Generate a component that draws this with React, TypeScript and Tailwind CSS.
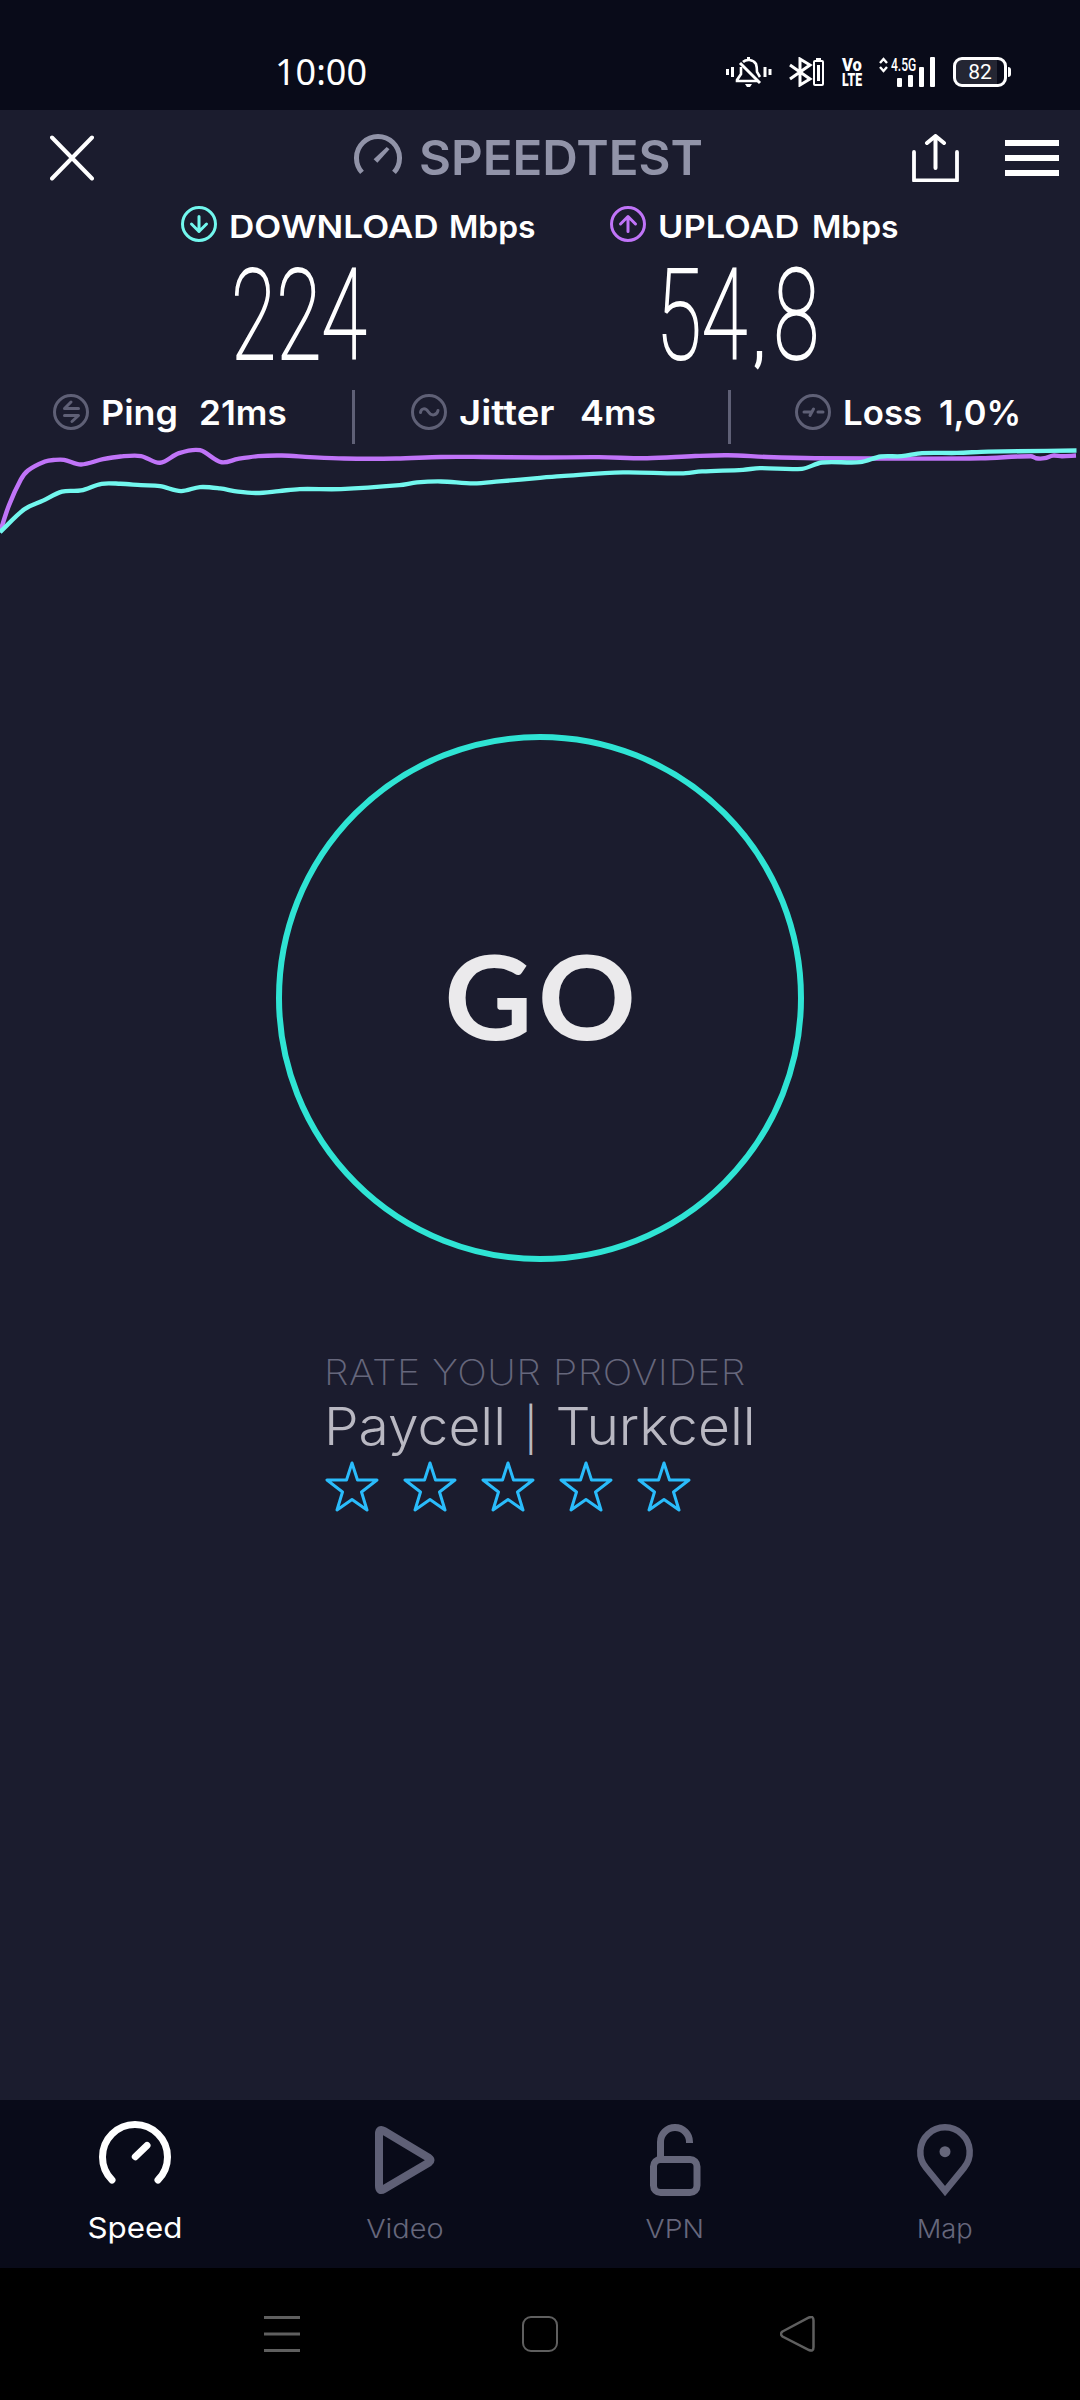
import { ReactNode } from "react";

type Point = [number, number];

const uploadPoints: Point[] = [
  [0, 106], [9, 78], [20.7, 51.7], [28, 42], [45, 32.7], [55, 31], [64, 31], [81, 35.8],
  [103, 30.3], [120.5, 27.5], [141, 27], [160, 34], [179, 24], [200, 21],
  [221, 33.4], [238, 30], [258, 27.2], [282, 26.5], [310, 28.2], [344, 29.6],
  [396, 29.6], [441, 28], [482, 28], [540, 28.5], [599, 28.2], [647, 29.3],
  [695, 27], [728, 26.2], [767, 28], [815, 29.3], [884, 29.6], [981, 29.3],
  [1031, 27.2], [1036, 29.3], [1044.5, 29.3], [1053, 26.5], [1062, 27.2],
  [1076, 26.5],
];

const downloadPoints: Point[] = [
  [0, 106], [24, 82.6], [43, 73.3], [62, 64], [81, 62.7], [101.6, 55.8],
  [120.5, 55.8], [141, 57.2], [160, 58.2], [181, 63.4], [200, 59.2],
  [220, 60.6], [238, 64], [256.5, 65.4], [279, 63.4], [299.6, 61.3],
  [341, 61.3], [399.5, 57.2], [417, 54.4], [441, 53.4], [473.5, 55.4],
  [499, 53.4], [540, 49.6], [561, 47.9], [623, 44], [681, 45], [702, 43],
  [743, 41.3], [760, 39.6], [802, 40.3], [822, 33.7], [860, 33.4],
  [881, 27.5], [901.6, 27.2], [922, 24], [957, 23.8], [988, 22.4],
  [1076.5, 21.3],
];

// Smooth curve through all points, control points kept inside each segment
function toPath(points: Point[]) {
  const slope = (i: number) => {
    const a = points[Math.max(i - 1, 0)];
    const b = points[Math.min(i + 1, points.length - 1)];
    return (b[1] - a[1]) / (b[0] - a[0]);
  };
  return points.reduce((path, [x, y], i) => {
    if (i === 0) return `M${x} ${y}`;
    const [px, py] = points[i - 1];
    const dx = (x - px) / 3;
    return `${path}C${px + dx} ${py + slope(i - 1) * dx} ${x - dx} ${
      y - slope(i) * dx
    } ${x} ${y}`;
  }, "");
}

function StatusBar() {
  return (
    <div className="flex h-[110px] items-start bg-[#090b19] pt-[57px] text-white">
      <span className="ml-[275px] w-[451px] font-['Noto_Sans'] text-[36px] leading-[30px]">
        10:00
      </span>
      <svg width="46" height="30" viewBox="0 0 46 30" fill="none" stroke="#fff">
        <path d="M1.5 12v6M6.5 10v10M39 10v10M44 12v6" strokeWidth="3" />
        <path d="M15 10v7l-4 6v1h21M17 5c3-3 10-3 13 2 1 3 1 5 1 8l3 5" strokeWidth="2.6" />
        <path d="M22.5 0v3M14 6l20 20" strokeWidth="3" />
        <path d="M19 27h7l-2 3h-3z" fill="#fff" stroke="none" />
      </svg>
      <svg className="ml-[17px]" width="36" height="30" viewBox="0 0 36 30" fill="none" stroke="#fff">
        <path d="M1 8l20 14-10 6V2l10 6L1 22" strokeWidth="3" />
        <rect x="25" y="4" width="9" height="24" rx="1" strokeWidth="2" />
        <path d="M27 2.5h5M29.5 8v16" strokeWidth="3" />
      </svg>
      <span className="ml-[17px] flex w-[22px] flex-col font-['Roboto'] font-black">
        <span className="w-[24px] origin-left scale-x-[.92] text-[18px] leading-[15px]">Vo</span>
        <span className="w-[28px] origin-left scale-x-[.68] text-[18px] leading-[16px]">LTE</span>
      </span>
      <span className="relative ml-[15px] h-[30px] w-[58px]">
        <svg width="58" height="30" viewBox="0 0 58 30" fill="#fff">
          <path d="M1 6l3.5-4L8 6M1 10l3.5 4L8 10" fill="none" stroke="#fff" strokeWidth="2.4" />
          <rect x="18" y="21" width="5" height="9" rx="1" />
          <rect x="29" y="18" width="5" height="12" rx="1" />
          <rect x="40" y="10" width="5" height="20" rx="1" />
          <rect x="51" y="0" width="5" height="30" rx="1" />
        </svg>
        <span className="absolute left-[12px] top-[-1px] origin-left scale-x-[.67] font-['Roboto'] text-[18px] font-medium leading-[18px]">
          4.5G
        </span>
      </span>
      <span className="ml-[16px] flex h-[30px] w-[54px] items-center justify-center rounded-[9px] border-[3px] border-white bg-linear-to-r from-[#242633] from-85% to-transparent to-85% font-['Roboto'] text-[21px] leading-none">
        82
      </span>
      <span className="ml-px mt-[10px] h-[10px] w-[3px] rounded-r-sm bg-white" />
    </div>
  );
}

function Header() {
  return (
    <div className="flex h-[96px] items-center">
      <svg className="ml-[50px]" width="44" height="46" viewBox="0 0 44 46" stroke="#fff" strokeWidth="4" strokeLinecap="round">
        <path d="M2 2.500l40 41M42 2.500l-40 41" />
      </svg>
      <svg className="ml-[260px]" width="48" height="48" viewBox="0 0 48 48" fill="none">
        <path d="M8 38.400A21.500 21.500 0 1 1 40 38.400" stroke="#9193a8" strokeWidth="5" />
        <path d="M19.600 25.300L32.700 13l2.800 2.300L23.400 28.700z" fill="#9193a8" />
      </svg>
      <span className="ml-[17px] w-[490px] font-['Inter'] text-[48px] font-semibold leading-[48px] text-[#9193a8]">
        <span className="inline-block origin-left scale-x-[1.025]">SPEEDTEST</span>
      </span>
      <svg className="ml-[3px]" width="47" height="48" viewBox="0 0 47 48" fill="none" stroke="#fff" strokeLinecap="round" strokeLinejoin="round">
        <path d="M2 18v28.500h43V18" strokeWidth="3.800" />
        <path d="M23.500 34V3M15 9l8.500-7L32 9" strokeWidth="4" />
      </svg>
      <div className="ml-[46px] flex w-[54px] flex-col gap-[9px]">
        <div className="h-[6px] bg-white" />
        <div className="h-[6px] bg-white" />
        <div className="h-[6px] bg-white" />
      </div>
    </div>
  );
}

function CircleIcon({ color, children }: { color: string; children: ReactNode }) {
  return (
    <svg className="shrink-0" width="36" height="36" viewBox="0 0 36 36" fill="none" stroke={color} strokeWidth="3" strokeLinecap="round" strokeLinejoin="round">
      <circle cx="18" cy="18" r="16.500" />
      {children}
    </svg>
  );
}

function Results() {
  return (
    <div className="flex h-[184px] font-['Inter'] text-white">
      <div className="ml-[181px] w-[429px]">
        <div className="flex h-[36px] items-center text-[31.500px] font-semibold leading-none">
          <CircleIcon color="#72f7ee">
            <path d="M18 10.500v15M10.500 18l7.500 7.500 7.500-7.500" />
          </CircleIcon>
          <span className="relative top-[3px] ml-[12px] w-[220px]">
            <span className="inline-block origin-left scale-x-[1.115]">DOWNLOAD</span>
          </span>
          <span className="relative top-[3px] origin-left scale-x-[1.010]">Mbps</span>
        </div>
        <div className="ml-[50px] mt-[16px] flex origin-left scale-x-[.655] font-['Roboto'] text-[126px] font-thin leading-[116px] [-webkit-text-stroke:2.200px_#fff]">
          224
        </div>
      </div>
      <div>
        <div className="flex h-[36px] items-center text-[31.500px] font-semibold leading-none">
          <CircleIcon color="#c074f8">
            <path d="M18 25.500v-15M10.500 18l7.500-7.500 7.500 7.500" />
          </CircleIcon>
          <span className="relative top-[3px] ml-[12px] w-[154px]">
            <span className="inline-block origin-left scale-x-[1.095]">UPLOAD</span>
          </span>
          <span className="relative top-[3px] origin-left scale-x-[1.010]">Mbps</span>
        </div>
        <div className="ml-[46px] mt-[16px] flex origin-left scale-x-[.66] items-baseline font-['Roboto'] text-[126px] font-thin leading-[116px] [-webkit-text-stroke:2.200px_#fff]">
          54
          <span className="w-[40px] pl-[12px] text-[64px] font-normal leading-none">,</span>
          8
        </div>
      </div>
    </div>
  );
}

function Stats() {
  return (
    <div className="flex h-[54px] font-['Inter'] text-[34.500px] font-semibold leading-none text-white">
      <div className="ml-[53px] flex h-[44px] w-[299px] items-center">
        <CircleIcon color="#5f6076">
          <path d="M25.500 14.500H11.500L18 8M11.500 21.500h14L19 27.500" />
        </CircleIcon>
        <span className="relative top-px ml-[12px] w-[98px] origin-left scale-x-[1.040]">Ping</span>
        <span className="relative top-px origin-left scale-x-[1.020]">21ms</span>
      </div>
      <div className="w-[3px] bg-[#5f6076]" />
      <div className="ml-[56px] flex h-[44px] w-[317px] items-center">
        <CircleIcon color="#5f6076">
          <path d="M9.500 18.500c.5-4.500 5-5 8-.5s8.500 3.500 9.500-1.500" />
        </CircleIcon>
        <span className="relative top-px ml-[12px] w-[121px] origin-left scale-x-[1.110]">Jitter</span>
        <span className="relative top-px origin-left scale-x-[1.040]">4ms</span>
      </div>
      <div className="w-[3px] bg-[#5f6076]" />
      <div className="ml-[64px] flex h-[44px] items-center">
        <CircleIcon color="#5f6076">
          <path d="M9 18h7.500M15 21.500l3.500-6.500M23 18h5" />
        </CircleIcon>
        <span className="relative top-px ml-[12px] w-[96px] origin-left scale-x-[1.010]">Loss</span>
        <span className="relative top-px">1,0%</span>
      </div>
    </div>
  );
}

function RateProvider() {
  return (
    <div className="ml-[324px] mt-[93px] w-[430px] whitespace-nowrap font-['Inter']">
      <div className="origin-left scale-x-[1.120] text-[35px] font-extralight leading-[35px] tracking-[.5px] text-[#66677c]">
        RATE YOUR PROVIDER
      </div>
      <div className="mt-[10px] flex h-[53px] origin-left scale-x-[1.050] items-baseline whitespace-pre text-[52.500px] font-light leading-[53px] text-[#b9b8c2]">
        Paycell <span className="px-[2px] text-[43px]">|</span> Turkcell
      </div>
      <div className="mt-[8px] flex gap-[24px] pl-px">
        {[1, 2, 3, 4, 5].map((star) => (
          <svg key={star} width="54" height="51" viewBox="0 0 54 51" fill="none" stroke="#2abcfb" strokeWidth="3" strokeLinejoin="round">
            <path d="M27 2l5.500 17H52L36.500 31l5.500 18L27 38.500 12 49l5.500-18L2 19h19.500z" />
          </svg>
        ))}
      </div>
    </div>
  );
}

function TabBar() {
  return (
    <div className="mt-auto grid h-[168px] grid-cols-4 bg-[#090b19] font-['Inter'] text-[26px] font-light leading-[30px] text-[#66677c]">
      <div className="flex flex-col items-center pt-[18px]">
        <svg width="76" height="84" viewBox="0 0 76 84" fill="none" stroke="#fff" strokeWidth="7" strokeLinecap="round">
          <path d="M15 62A32.500 32.500 0 1 1 61 62M38.300 38.700L50 27.500" />
        </svg>
        <span className="mt-[11px] scale-x-[1.080] text-[29px] font-normal text-white">Speed</span>
      </div>
      <div className="flex flex-col items-center pt-[18px]">
        <svg width="76" height="84" viewBox="0 0 76 84" fill="none" stroke="#5f6076" strokeWidth="8" strokeLinejoin="round">
          <path d="M12 16q0-6 5-3L62 40q3 2 0 4.500L17 71q-5 3-5-3z" />
        </svg>
        <span className="mt-[12px] scale-x-[1.110]">Video</span>
      </div>
      <div className="flex flex-col items-center pt-[18px]">
        <svg width="76" height="84" viewBox="0 0 76 84" fill="none" stroke="#66677b" strokeWidth="7">
          <rect x="16.500" y="41.500" width="43.500" height="33" rx="7" />
          <path d="M23.500 41V24a14.500 14.500 0 0 1 29 0v1" />
        </svg>
        <span className="mt-[12px] scale-x-[1.090]">VPN</span>
      </div>
      <div className="flex flex-col items-center pt-[18px]">
        <svg width="76" height="84" viewBox="0 0 76 84" fill="none" stroke="#5f6076" strokeWidth="6.500">
          <path d="M38 73L19 49.800A24.700 24.700 0 1 1 57 49.800z" />
          <circle cx="38" cy="33.700" r="5.500" fill="#66677b" stroke="none" />
        </svg>
        <span className="mt-[12px] scale-x-[1.050]">Map</span>
      </div>
    </div>
  );
}

function SystemNav() {
  return (
    <div className="flex h-[132px] items-start bg-black pt-[48px]">
      <svg className="ml-[264px]" width="36" height="36" stroke="#5f5f5f" strokeWidth="3">
        <path d="M0 1.500h36M0 18h36M0 34.500h36" />
      </svg>
      <div className="ml-[222px] size-[36px] rounded-[9px] border-[2.500px] border-[#5f5f5f]" />
      <svg className="ml-[222px]" width="36" height="36" viewBox="0 0 36 36" fill="none" stroke="#5f5f5f" strokeWidth="2.500">
        <path d="M2.500 15.500L29 1.500q4.500-2 4.500 3v26.500q0 5-4.500 3L2.500 20.500q-3-2.500 0-5z" />
      </svg>
    </div>
  );
}

export default function App() {
  return (
    <div className="flex h-[2400px] w-[1080px] flex-col overflow-hidden bg-[#1b1c2e]">
      <StatusBar />
      <Header />
      <Results />
      <Stats />
      <svg className="-mt-[14px] shrink-0" width="1080" height="106" viewBox="0 0 1080 110" preserveAspectRatio="none" fill="none" strokeWidth="4.500">
        <path d={toPath(uploadPoints)} stroke="#c074f8" />
        <path d={toPath(downloadPoints)} stroke="#72f7ee" />
      </svg>
      <button className="ml-[276px] mt-[198px] flex size-[528px] shrink-0 items-center justify-center rounded-full border-[6px] border-[#2fe4d4] font-['Lato'] text-[117px] font-bold leading-none text-[#ebeaec]">
        <span className="relative -top-[3px] scale-x-[1.040] pl-[5px] tracking-[5px]">GO</span>
      </button>
      <RateProvider />
      <TabBar />
      <SystemNav />
    </div>
  );
}
